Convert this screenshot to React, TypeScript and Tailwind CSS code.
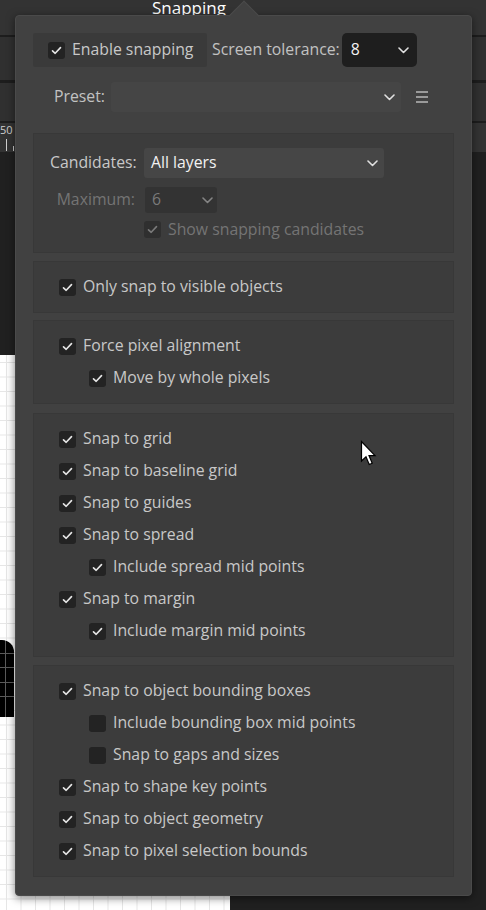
import type { ReactNode } from "react";

const FONT = "font-['Open_Sans','Noto_Sans',sans-serif]";

type Item = { label: string; checked: boolean; indent?: boolean };

const GROUPS: { gap: string; items: Item[] }[] = [
  { gap: "mt-[8px]", items: [{ label: "Only snap to visible objects", checked: true }] },
  {
    gap: "mt-[7px]",
    items: [
      { label: "Force pixel alignment", checked: true },
      { label: "Move by whole pixels", checked: true, indent: true },
    ],
  },
  {
    gap: "mt-[9px]",
    items: [
      { label: "Snap to grid", checked: true },
      { label: "Snap to baseline grid", checked: true },
      { label: "Snap to guides", checked: true },
      { label: "Snap to spread", checked: true },
      { label: "Include spread mid points", checked: true, indent: true },
      { label: "Snap to margin", checked: true },
      { label: "Include margin mid points", checked: true, indent: true },
    ],
  },
  {
    gap: "mt-[8px]",
    items: [
      { label: "Snap to object bounding boxes", checked: true },
      { label: "Include bounding box mid points", checked: false, indent: true },
      { label: "Snap to gaps and sizes", checked: false, indent: true },
      { label: "Snap to shape key points", checked: true },
      { label: "Snap to object geometry", checked: true },
      { label: "Snap to pixel selection bounds", checked: true },
    ],
  },
];

function Check({ checked, disabled }: { checked: boolean; disabled?: boolean }) {
  return (
    <span
      className={`w-[17px] h-[17px] rounded-[3px] flex items-center justify-center shrink-0 ${
        disabled ? "bg-[#2f2f2f]" : "bg-[#232323]"
      }`}
    >
      {checked && (
        <svg width="11" height="11" viewBox="0 0 11 11" fill="none">
          <path
            d="M1.5 5.8 L4.2 8.3 L9.5 2.6"
            stroke={disabled ? "#7a7a7a" : "#e6e6e6"}
            strokeWidth="1.6"
            strokeLinecap="round"
            strokeLinejoin="round"
          />
        </svg>
      )}
    </span>
  );
}

function Chevron({ color = "#e0e0e0" }: { color?: string }) {
  return (
    <svg width="11" height="7" viewBox="0 0 11 7" fill="none">
      <path d="M1 1 L5.5 5.5 L10 1" stroke={color} strokeWidth="1.6" strokeLinecap="round" strokeLinejoin="round" />
    </svg>
  );
}

function Section({ children, className = "" }: { children: ReactNode; className?: string }) {
  return (
    <div className={`bg-[#3c3c3c] border border-[#383838] ${className}`}>{children}</div>
  );
}

function Cursor() {
  return (
    <svg className="absolute left-[360px] top-[440px]" width="20" height="30" viewBox="0 0 20 30">
      <path
        d="M1.5 1.5 L1.5 21 L6 16.8 L9.2 24.5 L12.2 23.2 L9 15.6 L15 15.6 Z"
        fill="#ffffff"
        stroke="#000000"
        strokeWidth="1.2"
        strokeLinejoin="miter"
      />
    </svg>
  );
}

function SnappingPanel() {
  return (
    <div className="absolute left-[15px] top-[15px] w-[457px] h-[881px] rounded-[4px] bg-[#414141] border border-[#4a4a4a] shadow-[0_2px_8px_rgba(0,0,0,0.5)]">
      {/* pointer towards the toolbar button */}
      <div className="absolute left-[217px] top-[-11px] w-[22px] h-[22px] rotate-45 bg-[#414141] border-l border-t border-[#4a4a4a]" />

      <div className="relative px-[17px] pt-[17px] flex flex-col text-[15.8px]">
        {/* enable + tolerance */}
        <div className="flex items-center h-[34px]">
          <div className="w-[174px] h-[34px] bg-[#3a3a3a] rounded-[2px] flex items-center pl-[15px] gap-[7px]">
            <Check checked />
            <span className="text-[#c8c8c8]">Enable snapping</span>
          </div>
          <span className="ml-[5px] text-[#c2c2c2] whitespace-nowrap">Screen tolerance:</span>
          <div className="ml-[2px] w-[75px] h-[34px] rounded-[5px] bg-[#1e1e1e] flex items-center justify-between pl-[9px] pr-[8px]">
            <span className="text-[#f2f2f2]">8</span>
            <Chevron />
          </div>
        </div>

        {/* preset */}
        <div className="flex items-center h-[30px] mt-[15px]">
          <span className="w-[78px] pl-[21px] text-[#c2c2c2]">Preset:</span>
          <div className="w-[290px] h-[30px] rounded-[3px] bg-[#454545] flex items-center justify-end pr-[6px]">
            <Chevron />
          </div>
          <div className="ml-[15px] w-[12px] flex flex-col gap-[3px]">
            <span className="h-[2px] bg-[#9a9a9a]" />
            <span className="h-[2px] bg-[#9a9a9a]" />
            <span className="h-[2px] bg-[#9a9a9a]" />
          </div>
        </div>

        {/* candidates */}
        <Section className="mt-[21px] h-[120px] pl-[16px] pt-[14px]">
          <div className="grid grid-cols-[85px_1fr] gap-x-[9px] items-center">
            <span className="text-right text-[#c8c8c8]">Candidates:</span>
            <div className="w-[240px] h-[30px] rounded-[3px] bg-[#464646] flex items-center justify-between pl-[7px] pr-[6px]">
              <span className="text-[#f2f2f2]">All layers</span>
              <Chevron />
            </div>
            <span className="mt-[9px] text-right text-[#747474]">Maximum:</span>
            <div className="mt-[9px] ml-[1px] w-[72px] h-[26px] rounded-[3px] bg-[#333333] flex items-center justify-between pl-[7px] pr-[4px]">
              <span className="text-[#7a7a7a]">6</span>
              <Chevron color="#858585" />
            </div>
            <span />
            <div className="mt-[5px] flex items-center gap-[7px]">
              <Check checked disabled />
              <span className="text-[#747474]">Show snapping candidates</span>
            </div>
          </div>
        </Section>

        {GROUPS.map((group, gi) => (
          <Section key={gi} className={`${group.gap} py-[9px] pl-[25px]`}>
            {group.items.map((item) => (
              <div
                key={item.label}
                className={`h-[32px] flex items-center gap-[7px] ${item.indent ? "pl-[30px]" : ""}`}
              >
                <Check checked={item.checked} />
                <span className="text-[#c8c8c8]">{item.label}</span>
              </div>
            ))}
          </Section>
        ))}
      </div>
    </div>
  );
}

export default function App() {
  return (
    <div className={`relative w-[486px] h-[910px] overflow-hidden bg-[#202020] ${FONT}`}>
      {/* app chrome behind the popover */}
      <div className="flex flex-col h-full">
        <div className="h-[35px] bg-[#333333] flex items-start pl-[152px]">
          <span className="mt-[-3px] text-[17px] leading-[22px] text-white">Snapping</span>
        </div>
        <div className="h-[2px] bg-[#1d1d1d]" />
        <div className="h-[43px] bg-[#303030]" />
        <div className="h-[3px] bg-[#1d1d1d]" />
        <div className="h-[38px] bg-[#303030]" />
        <div className="h-[2px] bg-[#1d1d1d]" />
        {/* ruler */}
        <div className="h-[29px] bg-[#333333] flex flex-col">
          <span className="text-[11px] leading-[14px] text-[#cfcfcf]">50</span>
          <div className="flex items-end h-[14px] pl-[6px] gap-[6px]">
            <span className="w-px h-[12px] bg-[#cfcfcf]" />
            <span className="w-px h-[5px] bg-[#cfcfcf]" />
          </div>
        </div>
        <div className="h-[203px] bg-[#202020]" />
        <div className="flex-1 flex">
          <div className="relative w-[230px] bg-white bg-[linear-gradient(to_right,#e6e6e6_1px,transparent_1px),linear-gradient(to_bottom,#e6e6e6_1px,transparent_1px)] bg-[size:14.5px_14.5px] bg-[position:6px_7px]">
            <div className="absolute left-0 top-[285px] w-[14px] h-[77px] bg-black rounded-tr-[12px] bg-[linear-gradient(to_right,transparent_5px,#5a5a5a_5px,#5a5a5a_6px,transparent_6px),linear-gradient(to_bottom,transparent_13px,#5a5a5a_13px,#5a5a5a_14px,transparent_14px,transparent_27px,#5a5a5a_27px,#5a5a5a_28px,transparent_28px,transparent_42px,#5a5a5a_42px,#5a5a5a_43px,transparent_43px,transparent_56px,#5a5a5a_56px,#5a5a5a_57px,transparent_57px)]" />
          </div>
          <div className="flex-1 bg-[#202020]" />
        </div>
      </div>

      <SnappingPanel />
      <Cursor />
    </div>
  );
}
